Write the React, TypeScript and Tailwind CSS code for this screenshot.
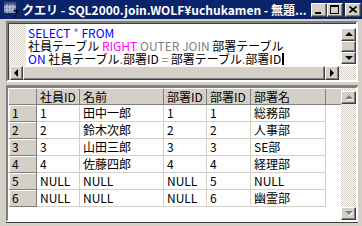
import React from 'react'

const font = "font-['Noto_Sans_CJK_JP','Liberation_Sans',sans-serif]"

const raised =
  'bg-[#d4d0c8] border border-t-white border-l-white border-r-[#404040] border-b-[#404040] shadow-[inset_-1px_-1px_#808080]'

const checker =
  'bg-[image:repeating-conic-gradient(#d4d0c8_0_25%,#ffffff_0_50%)] bg-[length:2px_2px]'

function Tri({ dir, disabled }: { dir: 'up' | 'down' | 'left' | 'right'; disabled?: boolean }) {
  const pts = {
    up: '0,4 4,0 8,4',
    down: '0,0 8,0 4,4',
    left: '4,0 4,8 0,4',
    right: '0,0 0,8 4,4',
  }[dir]
  const wide = dir === 'up' || dir === 'down'
  return (
    <svg width={wide ? 8 : 5} height={wide ? 5 : 8} viewBox={wide ? '0 0 8 5' : '0 0 5 8'}>
      {disabled && <polygon points={pts} fill="#ffffff" transform="translate(1,1)" />}
      <polygon points={pts} fill={disabled ? '#808080' : '#000000'} />
    </svg>
  )
}

function AppIcon() {
  return (
    <svg width="17" height="17" viewBox="0 0 17 17">
      <rect x="1" y="3" width="12" height="9" fill="#6b7fa8" />
      <rect x="1" y="1" width="12" height="3" fill="#3a4f86" />
      <path d="M1 6h12M1 9h12M4 3v9M7 3v9M10 3v9" stroke="#c8d0e0" strokeWidth="1" />
      <rect x="0" y="0" width="14" height="13" fill="none" stroke="#1c2a55" strokeWidth="1" />
      <path d="M11 10.5c0-1.5 3-1.5 3 0s-1.5 1.2-1.5 2.5" stroke="#000" strokeWidth="1.6" fill="none" />
      <rect x="11.7" y="14.3" width="1.6" height="1.6" fill="#000" />
    </svg>
  )
}

const cols = [28, 43, 84, 43, 44, 75]
const headers = ['', '社員ID', '名前', '部署ID', '部署ID', '部署名']
const rows = [
  ['1', '1', '田中一郎', '1', '1', '総務部'],
  ['2', '2', '鈴木次郎', '2', '2', '人事部'],
  ['3', '3', '山田三郎', '3', '3', 'SE部'],
  ['4', '4', '佐藤四郎', '4', '4', '経理部'],
  ['5', 'NULL', 'NULL', 'NULL', '5', 'NULL'],
  ['6', 'NULL', 'NULL', 'NULL', '6', '幽霊部'],
]

export default function App() {
  return (
    <div className={`flex h-[226px] w-[362px] flex-col overflow-hidden bg-[#d4d0c8] text-[12px] text-black ${font}`}>
      {/* Title bar */}
      <div className="flex h-[19px] shrink-0 items-center bg-[#0a246a] pl-[3px] pr-[1px]">
        <AppIcon />
        <span className="ml-[2px] whitespace-nowrap text-[12px] font-bold leading-none text-white">
          クエリ - SQL2000.join.WOLF¥uchukamen - 無題...
        </span>
        <div className="ml-auto flex items-center">
          <div className={`flex h-[14px] w-[16px] items-end pb-[2px] pl-[3px] ${raised}`}>
            <div className="h-[2px] w-[6px] bg-black" />
          </div>
          <div className={`flex h-[14px] w-[16px] items-start pl-[2px] pt-[1px] ${raised}`}>
            <div className="h-[9px] w-[9px] border border-t-2 border-black" />
          </div>
          <div className={`ml-[2px] flex h-[14px] w-[16px] items-center justify-center ${raised}`}>
            <svg width="8" height="7" viewBox="0 0 8 7">
              <path d="M0.5 0.5l7 6M7.5 0.5l-7 6" stroke="#000" strokeWidth="1.6" />
            </svg>
          </div>
        </div>
      </div>

      <div className="flex flex-1 flex-col pl-[6px] pr-[4px] pt-[2px]">
        {/* SQL pane */}
        <div className="flex h-[61px] shrink-0 flex-col border-2 border-t-[#808080] border-l-[#808080] border-r-white border-b-white shadow-[inset_1px_1px_#404040]">
          <div className="flex flex-1 pl-[1px] pt-[1px]">
            <div className={`w-[17px] ${checker}`} />
            <div className="flex-1 bg-white pl-[2px] pt-[2px] leading-[13px]">
              <div className="whitespace-nowrap">
                <span className="text-[#0000ff]">SELECT</span> <span className="text-[#808080]">*</span>{' '}
                <span className="text-[#0000ff]">FROM</span>
              </div>
              <div className="whitespace-nowrap">
                社員テーブル <span className="text-[#ff00ff]">RIGHT</span>{' '}
                <span className="text-[#808080]">OUTER JOIN</span> 部署テーブル
              </div>
              <div className="flex items-center whitespace-nowrap">
                <span className="text-[#0000ff]">ON</span>&nbsp;社員テーブル<span className="text-[#808080]">.</span>
                部署ID&nbsp;<span className="text-[#808080]">=</span>&nbsp;部署テーブル
                <span className="text-[#808080]">.</span>部署ID
                <span className="ml-[1px] inline-block h-[12px] w-[2px] bg-black" />
              </div>
            </div>
            <div className="flex w-[15px] flex-col bg-white pt-[4px]">
              <div className={`flex h-[13px] items-center justify-center ${raised}`}>
                <Tri dir="up" />
              </div>
              <div className={`h-[11px] ${raised}`} />
              <div className={`flex h-[12px] items-center justify-center ${raised}`}>
                <Tri dir="down" />
              </div>
            </div>
          </div>
          <div className="flex h-[14px] pl-[2px]">
            <div className={`flex w-[13px] items-center justify-center ${raised}`}>
              <Tri dir="left" />
            </div>
            <div className={`flex-1 ${raised}`} />
            <div className={`flex w-[14px] items-center justify-center ${raised}`}>
              <Tri dir="right" />
            </div>
            <div className={`w-[17px] ${checker}`} />
          </div>
        </div>

        {/* Splitter */}
        <div className="h-[4px] shrink-0 border-b border-[#808080]" />

        {/* Results grid */}
        <div className="flex h-[136px] shrink-0 border-2 border-t-[#808080] border-l-[#808080] border-r-white border-b-white shadow-[inset_1px_1px_#404040]">
          <div className="flex flex-1 flex-col bg-white pl-[1px] pt-[1px]">
            <div className="flex h-[16px] bg-[#d4d0c8]">
              {headers.map((h, i) => (
                <div
                  key={i}
                  style={{ width: cols[i] }}
                  className="flex items-center border-r border-b border-[#808080] pl-[3px] leading-[15px] whitespace-nowrap"
                >
                  {h}
                </div>
              ))}
              <div className="flex-1 border-b border-[#808080]" />
            </div>
            {rows.map((r, ri) => (
              <div key={ri} className="flex h-[17px]">
                {r.map((c, ci) => (
                  <div
                    key={ci}
                    style={{ width: cols[ci] }}
                    className={
                      ci === 0
                        ? 'flex items-center border-r border-b border-r-[#808080] border-b-[#808080] bg-[#d4d0c8] pl-[3px] leading-[16px] shadow-[inset_1px_1px_#ffffff]'
                        : 'flex items-center border-r border-b border-[#d4d0c8] pl-[3px] leading-[16px] whitespace-nowrap'
                    }
                  >
                    {c}
                  </div>
                ))}
              </div>
            ))}
          </div>
          <div className={`flex w-[15px] flex-col pt-[3px] ${checker}`}>
            <div className={`flex h-[13px] items-center justify-center ${raised}`}>
              <Tri dir="up" disabled />
            </div>
            <div className="flex-1" />
            <div className={`flex h-[13px] items-center justify-center ${raised}`}>
              <Tri dir="down" disabled />
            </div>
          </div>
        </div>

        <div className="h-[3px] shrink-0 border-t border-[#404040]" />
      </div>
    </div>
  )
}
